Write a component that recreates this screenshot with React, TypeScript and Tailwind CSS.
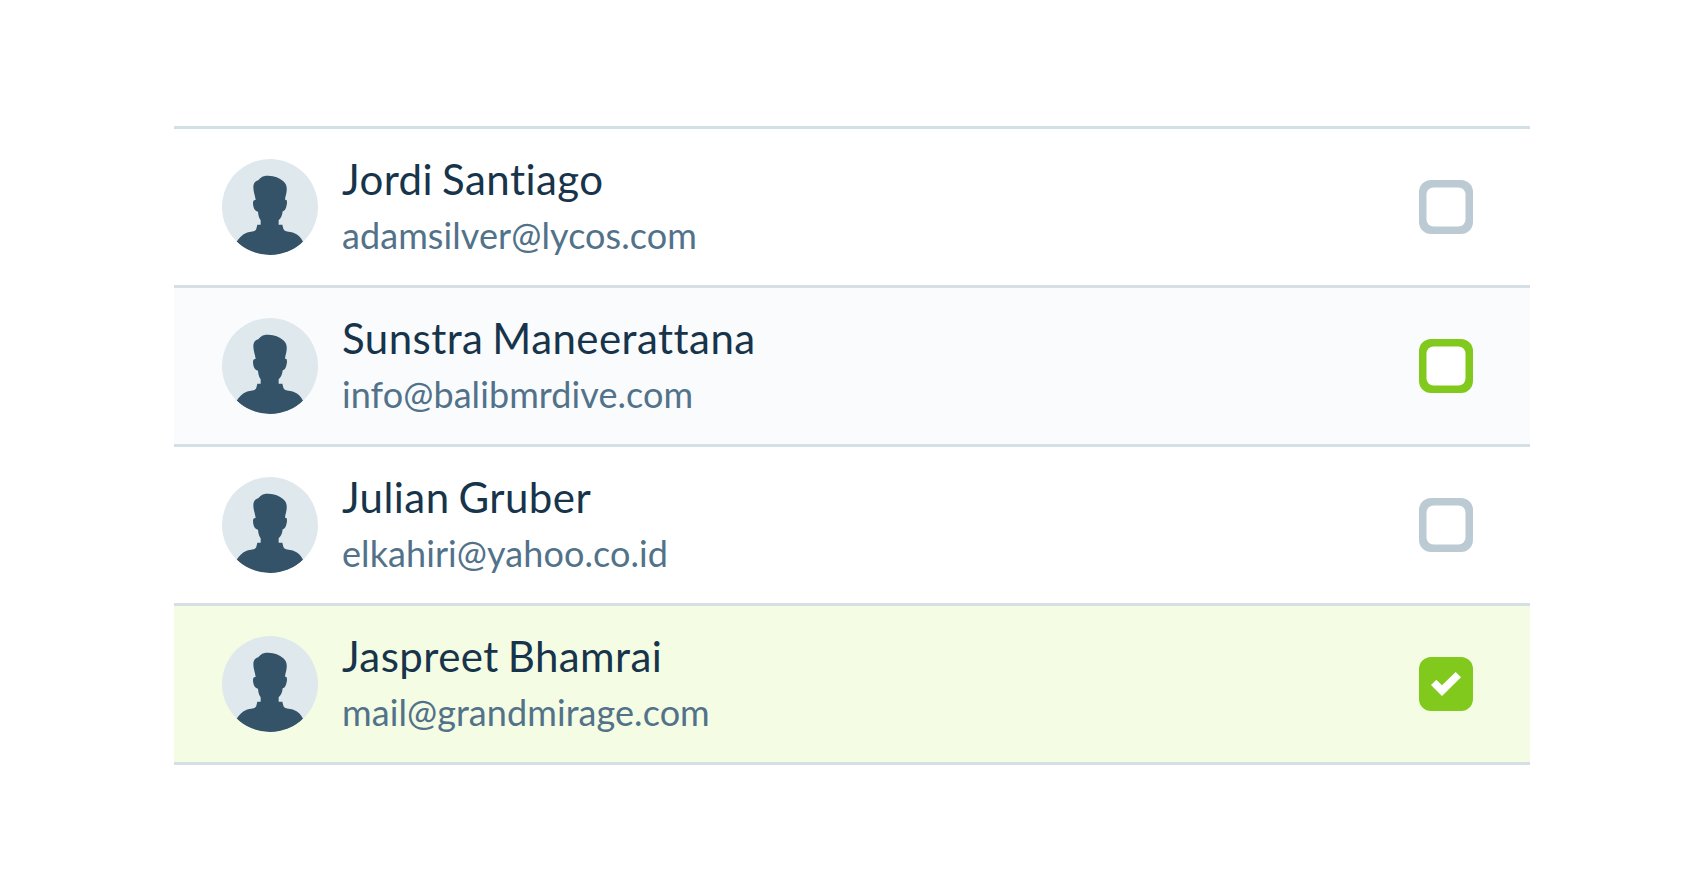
type Contact = {
  name: string;
  email: string;
  state: "idle" | "hover" | "checked";
};

const contacts: Contact[] = [
  { name: "Jordi Santiago", email: "adamsilver@lycos.com", state: "idle" },
  { name: "Sunstra Maneerattana", email: "info@balibmrdive.com", state: "hover" },
  { name: "Julian Gruber", email: "elkahiri@yahoo.co.id", state: "idle" },
  { name: "Jaspreet Bhamrai", email: "mail@grandmirage.com", state: "checked" },
];

const rowColor = {
  idle: "bg-white",
  hover: "bg-[#fafbfd]",
  checked: "bg-[#f4fce3]",
};

const boxColor = {
  idle: "bg-[#bbcad3]",
  hover: "bg-[#81ca1d]",
  checked: "bg-[#81ca1d]",
};

function Avatar() {
  return (
    <svg viewBox="0 0 288 288" className="size-24 shrink-0 rounded-full bg-[#dfe8ed]" aria-hidden="true">
      <path
        fill="#345268"
        d="M44 248 C51 236 61 226 74 221 C88 216 99 220 103 209 L106 197 L116 197 L116 184 C112 178 109 171 108 158 C97 156 93 144 93 132 C93 125 96 122 101 123 C99 108 94 99 94 84 C94 74 99 66 109 64 C114 57 121 50 136 50 C156 49 171 56 184 67 C193 75 195 83 194 95 C193 106 189 115 189 123 C194 121 195 125 195 132 C193 146 190 155 182 157 C181 169 177 177 170 184 L170 197 L181 197 L184 209 C189 220 201 216 214 221 C228 226 237 235 243 248 C217 274 184 289 144 289 C104 289 70 274 44 248 Z"
      />
    </svg>
  );
}

function Checkbox({ state }: { state: Contact["state"] }) {
  return (
    <span
      role="checkbox"
      aria-checked={state === "checked"}
      className={`flex size-[54px] shrink-0 items-center justify-center rounded-xl ${boxColor[state]}`}
    >
      {state === "checked" ? (
        <svg viewBox="0 0 162 162" className="size-[54px]" aria-hidden="true">
          <path fill="#fff" d="M52 68 L69 85 L110 45 L126 61 L69 117 L36 84 Z" />
        </svg>
      ) : (
        <svg viewBox="0 0 54 54" className="size-[54px]" aria-hidden="true">
          <rect x="7.5" y="7.5" width="39" height="39" rx="7" fill="#fff" />
        </svg>
      )}
    </span>
  );
}

export default function App() {
  return (
    <main className="min-h-screen bg-white px-[174px] pt-[126px] font-['Lato',sans-serif]">
      <ul className="border-t-[3px] border-[#d4dfe6]">
        {contacts.map((c) => (
          <li
            key={c.email}
            className={`flex h-[159px] items-center border-b-[3px] border-[#d4dfe6] pr-[57px] pl-12 ${rowColor[c.state]}`}
          >
            <Avatar />
            <div className="ml-6 flex flex-1 flex-col gap-0.5 whitespace-nowrap">
              <p className="text-[42px] leading-[54px] tracking-[0.45px] text-[#17344b] [word-spacing:-2.3px]">{c.name}</p>
              <p className="text-[36px] leading-[54px] tracking-[0.08px] text-[#52728a]">{c.email}</p>
            </div>
            <Checkbox state={c.state} />
          </li>
        ))}
      </ul>
    </main>
  );
}
